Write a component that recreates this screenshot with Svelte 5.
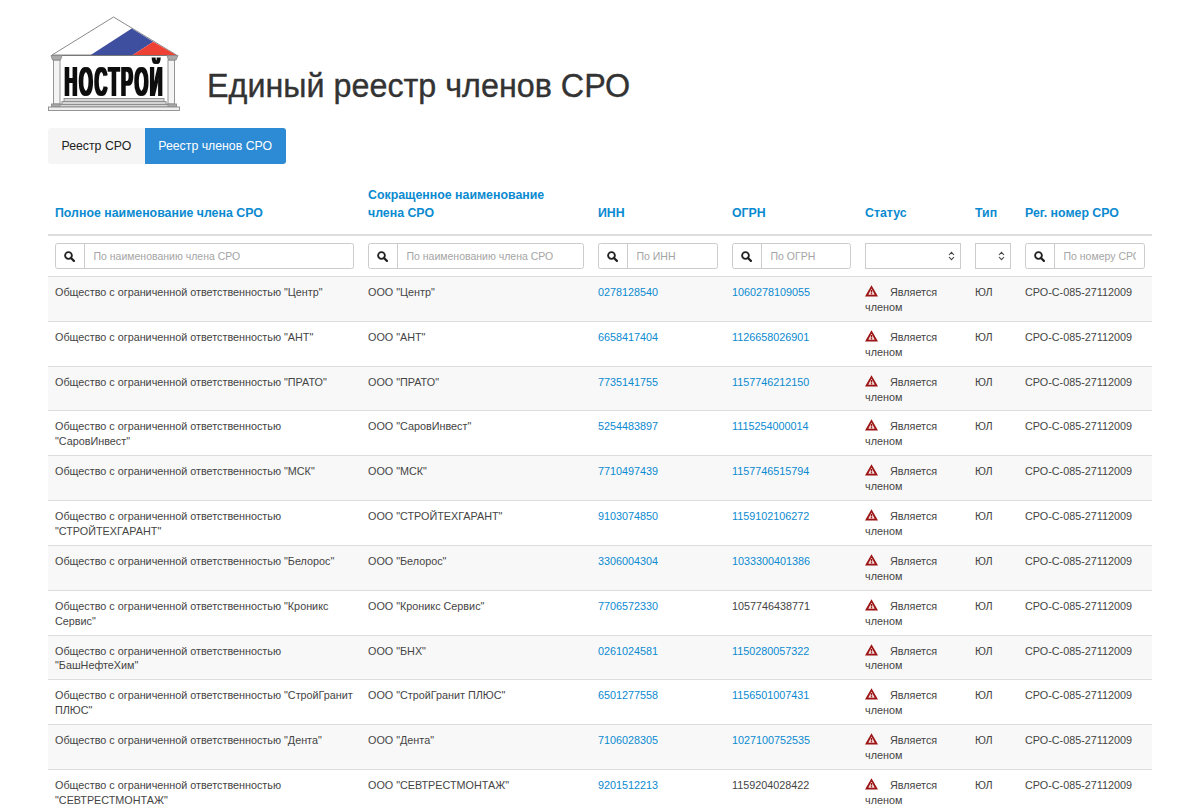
<script>
  const full = 'Общество с ограниченной ответственностью ';
  const rows = [
    ['"Центр"', 'ООО "Центр"', '0278128540', '1060278109055', true],
    ['"АНТ"', 'ООО "АНТ"', '6658417404', '1126658026901', true],
    ['"ПРАТО"', 'ООО "ПРАТО"', '7735141755', '1157746212150', true],
    ['"СаровИнвест"', 'ООО "СаровИнвест"', '5254483897', '1115254000014', true],
    ['"МСК"', 'ООО "МСК"', '7710497439', '1157746515794', true],
    ['"СТРОЙТЕХГАРАНТ"', 'ООО "СТРОЙТЕХГАРАНТ"', '9103074850', '1159102106272', true],
    ['"Белорос"', 'ООО "Белорос"', '3306004304', '1033300401386', true],
    ['"Кроникс Сервис"', 'ООО "Кроникс Сервис"', '7706572330', '1057746438771', false],
    ['"БашНефтеХим"', 'ООО "БНХ"', '0261024581', '1150280057322', true],
    ['"СтройГранит ПЛЮС"', 'ООО "СтройГранит ПЛЮС"', '6501277558', '1156501007431', true],
    ['"Дента"', 'ООО "Дента"', '7106028305', '1027100752535', true],
    ['"СЕВТРЕСТМОНТАЖ"', 'ООО "СЕВТРЕСТМОНТАЖ"', '9201512213', '1159204028422', false]
  ];
  const heads = [
    'Полное наименование члена СРО',
    'Сокращенное наименование\nчлена СРО',
    'ИНН',
    'ОГРН',
    'Статус',
    'Тип',
    'Рег. номер СРО'
  ];
</script>

{#snippet search(text)}
  <div class="search">
    <span class="addon">
      <svg width="11" height="11" viewBox="0 0 12 12" aria-hidden="true">
        <circle cx="4.9" cy="4.9" r="3.7" fill="none" stroke="#222" stroke-width="2" />
        <path d="M7.6 7.6 10.8 10.8" stroke="#222" stroke-width="2.4" stroke-linecap="round" />
      </svg>
    </span>
    <span class="ph">{text}</span>
  </div>
{/snippet}

{#snippet select()}
  <div class="select">
    <svg width="7" height="10" viewBox="0 0 7 10" aria-hidden="true">
      <path d="M1 4 3.5 1.3 6 4M1 6 3.5 8.7 6 6" fill="none" stroke="#444" stroke-width="1.1" />
    </svg>
  </div>
{/snippet}

<div class="page">
  <header class="top">
    <svg class="logo" width="132" height="96" viewBox="48 16 132 96" role="img" aria-label="НОСТРОЙ">
      <defs>
        <filter id="heavy" x="-5%" y="-5%" width="110%" height="110%">
          <feMorphology operator="dilate" radius="2 0.4" />
        </filter>
      </defs>
      <path d="M113.5 17 176.5 55H52Z" fill="#fff" stroke="#8a8a8a" stroke-width="1" />
      <path d="M131.7 28.5 153.3 41.7 132.7 55H90.7Z" fill="#3f4f9f" />
      <path d="M153.3 41.7 176 55H132.7Z" fill="#ee4136" />
      <path d="M52 55.5H177" stroke="#777" stroke-width="1" />
      <g fill="#f4f4f4" stroke="#8a8a8a" stroke-width="0.9">
        <rect x="53.5" y="60" width="6.5" height="44" />
        <rect x="168" y="60" width="6.5" height="44" />
        <path d="M51 55.5H62L60.5 60H52.5Z" fill="#a9a9a9" />
        <path d="M167 55.5H178L176 60H168.5Z" fill="#a9a9a9" />
        <rect x="51.5" y="104" width="10" height="3" fill="#a9a9a9" />
        <rect x="166.5" y="104" width="10" height="3" fill="#a9a9a9" />
        <rect x="64" y="98.5" width="100" height="3" fill="#d4d4d4" />
        <rect x="62" y="101.5" width="104" height="3" fill="#d4d4d4" />
        <rect x="60" y="104.5" width="108" height="2.5" fill="#d4d4d4" />
        <rect x="48.5" y="107" width="131" height="3.5" fill="#efefef" />
      </g>
      <text class="logotext" transform="translate(64.5 95.5) scale(.414 1)" filter="url(#heavy)">НОСТРОЙ</text>
    </svg>
    <h1>Единый реестр членов СРО</h1>
  </header>

  <nav class="tabs">
    <span class="tab">Реестр СРО</span>
    <span class="tab active">Реестр членов СРО</span>
  </nav>

  <table>
    <colgroup>
      <col style="width:313px" /><col style="width:230px" /><col style="width:134px" /><col style="width:133px" />
      <col style="width:110px" /><col style="width:50px" /><col style="width:134px" />
    </colgroup>
    <thead>
      <tr class="heads">
        {#each heads as h}<th>{h}</th>{/each}
      </tr>
      <tr class="filters">
        <td>{@render search('По наименованию члена СРО')}</td>
        <td>{@render search('По наименованию члена СРО')}</td>
        <td>{@render search('По ИНН')}</td>
        <td>{@render search('По ОГРН')}</td>
        <td>{@render select()}</td>
        <td>{@render select()}</td>
        <td>{@render search('По номеру СРО')}</td>
      </tr>
    </thead>
    <tbody>
      {#each rows as r}
        <tr>
          <td class="name">{full}{r[0]}</td>
          <td>{r[1]}</td>
          <td><a href="#inn">{r[2]}</a></td>
          <td>{#if r[4]}<a href="#ogrn">{r[3]}</a>{:else}{r[3]}{/if}</td>
          <td>
            <svg class="warn" width="13" height="12" viewBox="0 0 13 12" aria-hidden="true">
              <path d="M6.5.3 13 11.6H0Z" fill="#9c1414" />
              <path d="M6.5 3.6 9.7 9.7H3.3Z" fill="#f4e6e6" />
              <rect x="5.8" y="4.9" width="1.4" height="2.7" fill="#9c1414" />
              <rect x="5.8" y="8.1" width="1.4" height="1.3" fill="#9c1414" />
            </svg>Является членом
          </td>
          <td>ЮЛ</td>
          <td>СРО-С-085-27112009</td>
        </tr>
      {/each}
    </tbody>
  </table>
</div>

<style>
  :global(body) {
    margin: 0;
    background: #fff;
    font-family: "Liberation Sans", Arial, sans-serif;
    color: #444;
  }
  .page {
    padding: 16px 48px 0;
    height: 790px;
    overflow: hidden;
  }
  .top {
    display: flex;
    align-items: flex-end;
    gap: 27px;
    height: 96px;
  }
  .logo {
    display: block;
    flex: none;
  }
  .logotext {
    font-family: "Liberation Sans", Arial, sans-serif;
    font-weight: 700;
    font-size: 43px;
    letter-spacing: 4px;
    fill: #111;
  }
  h1 {
    margin: 0 0 8px;
    font-size: 32.3px;
    font-weight: 400;
    line-height: 36px;
    color: #333;
    -webkit-text-stroke: 0.35px #333;
    white-space: nowrap;
  }
  .tabs {
    display: flex;
    margin-top: 16px;
    height: 36px;
    font-size: 12.3px;
  }
  .tab {
    display: flex;
    align-items: center;
    padding: 0 13.5px;
    background: #f5f5f5;
    color: #222;
    border-radius: 3px 0 0 3px;
  }
  .tab.active {
    background: #2d8ad4;
    color: #fff;
    border-radius: 0 3px 3px 0;
  }
  table {
    width: 1104px;
    margin-top: 22px;
    border-collapse: collapse;
    table-layout: fixed;
    font-size: 10.8px;
    line-height: 14.9px;
  }
  th {
    padding: 0 7px 12px;
    vertical-align: bottom;
    text-align: left;
    font-size: 12.35px;
    line-height: 18px;
    color: #0a8ad0;
    border-bottom: 2px solid #ddd;
    white-space: pre-line;
  }
  td {
    vertical-align: top;
    border-bottom: 1px solid #ddd;
  }
  .filters td {
    padding: 7px;
    height: 26px;
  }
  tbody td {
    padding: 8px 7px 6px;
    height: 29.8px;
    overflow-wrap: break-word;
  }
  tbody td.name {
    padding-right: 3px;
  }
  tbody tr:nth-child(odd) {
    background: #f8f8f8;
  }
  a {
    color: #0a8ad0;
    text-decoration: none;
  }
  .warn {
    display: inline-block;
    vertical-align: -1px;
    margin-right: 12px;
  }
  .search {
    display: flex;
    height: 26px;
    box-sizing: border-box;
    border: 1px solid #ccc;
    border-radius: 2.5px;
    overflow: hidden;
    background: #fff;
  }
  .addon {
    flex: none;
    width: 27.5px;
    display: flex;
    align-items: center;
    justify-content: center;
    border-right: 1px solid #ccc;
  }
  .ph {
    padding-left: 9px;
    margin-right: 8px;
    font-size: 10.5px;
    line-height: 24px;
    color: #a5a5a5;
    white-space: nowrap;
    overflow: hidden;
  }
  .select {
    height: 26px;
    box-sizing: border-box;
    border: 1px solid #ccc;
    background: #fff;
    display: flex;
    align-items: center;
    justify-content: flex-end;
    padding-right: 5px;
  }
</style>
